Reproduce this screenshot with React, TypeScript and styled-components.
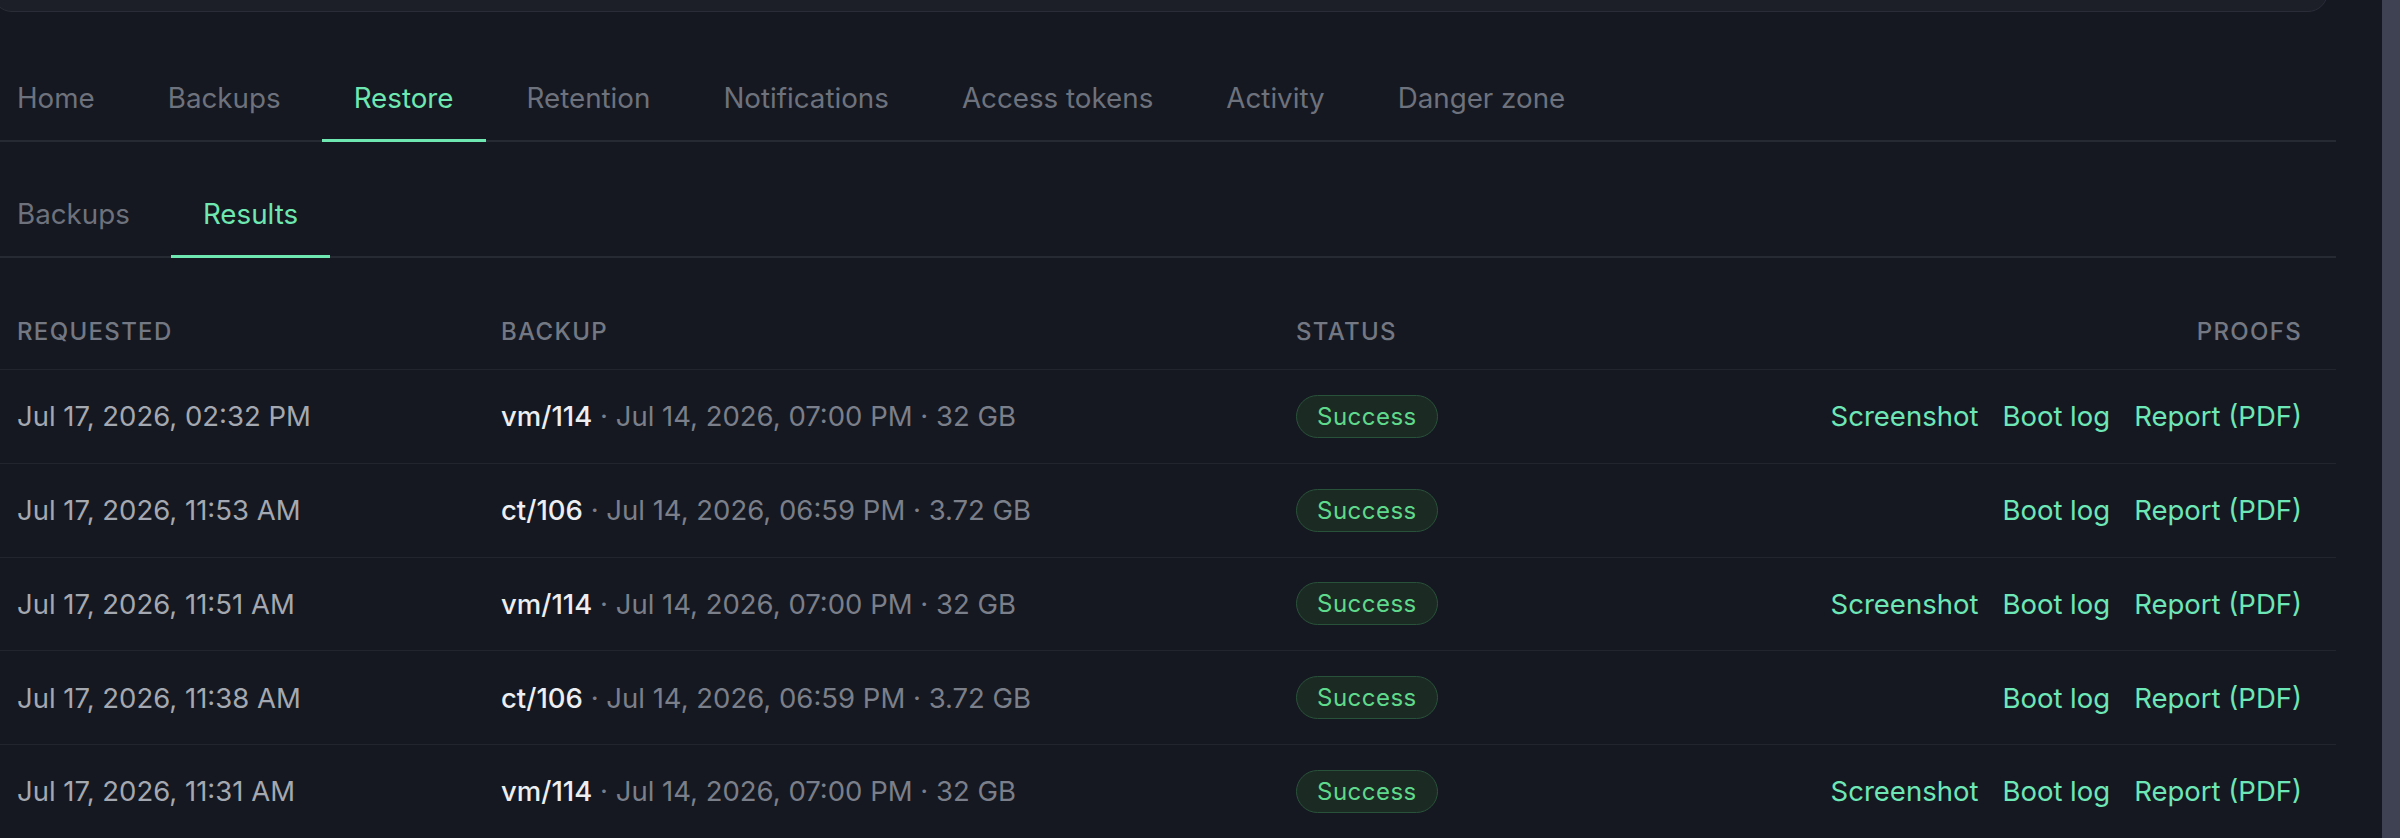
import React from 'react';
import styled, { createGlobalStyle } from 'styled-components';

const GlobalStyle = createGlobalStyle`
  html, body {
    margin: 0;
    padding: 0;
    background: #151821;
    overflow: hidden;
  }
  body {
    font-family: Inter, 'Noto Sans', sans-serif;
    -webkit-font-smoothing: antialiased;
  }
`;

type Row = {
  requested: string;
  id: string;
  meta: string;
  screenshot: boolean;
};

const rows: Row[] = [
  { requested: 'Jul 17, 2026, 02:32 PM', id: 'vm/114', meta: 'Jul 14, 2026, 07:00 PM · 32 GB', screenshot: true },
  { requested: 'Jul 17, 2026, 11:53 AM', id: 'ct/106', meta: 'Jul 14, 2026, 06:59 PM · 3.72 GB', screenshot: false },
  { requested: 'Jul 17, 2026, 11:51 AM', id: 'vm/114', meta: 'Jul 14, 2026, 07:00 PM · 32 GB', screenshot: true },
  { requested: 'Jul 17, 2026, 11:38 AM', id: 'ct/106', meta: 'Jul 14, 2026, 06:59 PM · 3.72 GB', screenshot: false },
  { requested: 'Jul 17, 2026, 11:31 AM', id: 'vm/114', meta: 'Jul 14, 2026, 07:00 PM · 32 GB', screenshot: true },
];

const mainTabs = ['Home', 'Backups', 'Restore', 'Retention', 'Notifications', 'Access tokens', 'Activity', 'Danger zone'];
const subTabs = ['Backups', 'Results'];

const App: React.FC = () => {
  return (
    <>
      <GlobalStyle />
      <Screen>
        <Main>
          <Content>
            <SummaryCard />
            <TabList $top={66}>
              {mainTabs.map((t) => (
                <Tab key={t} $active={t === 'Restore'}>
                  {t}
                </Tab>
              ))}
            </TabList>
            <TabList $top={52}>
              {subTabs.map((t) => (
                <Tab key={t} $active={t === 'Results'}>
                  {t}
                </Tab>
              ))}
            </TabList>
            <Table>
              <HeadRow>
                <HeadCell>Requested</HeadCell>
                <HeadCell>Backup</HeadCell>
                <HeadCell>Status</HeadCell>
                <HeadCell $right>Proofs</HeadCell>
              </HeadRow>
              {rows.map((r, i) => (
                <BodyRow key={i}>
                  <Cell>{r.requested}</Cell>
                  <Cell>
                    <BackupId>{r.id}</BackupId>
                    <BackupMeta> · {r.meta}</BackupMeta>
                  </Cell>
                  <Cell>
                    <Badge>Success</Badge>
                  </Cell>
                  <Cell $right>
                    <Links>
                      {r.screenshot && <ProofLink href="#">Screenshot</ProofLink>}
                      <ProofLink href="#">Boot log</ProofLink>
                      <ProofLink href="#">Report (PDF)</ProofLink>
                    </Links>
                  </Cell>
                </BodyRow>
              ))}
            </Table>
          </Content>
        </Main>
        <ScrollRail />
      </Screen>
    </>
  );
};

export default App;

const Screen = styled.div`
  display: flex;
  width: 2400px;
  height: 838px;
  overflow: hidden;
`;

const Main = styled.div`
  flex: 1;
  min-width: 0;
  overflow: hidden;
`;

const Content = styled.div`
  width: 2351px;
  margin-left: -15px;
`;

const SummaryCard = styled.div`
  height: 80px;
  margin: -70px 8px 0 7px;
  background: #1c1f28;
  border: 1.5px solid #2a2d37;
  border-radius: 20px;
`;

const TabList = styled.div<{ $top: number }>`
  display: flex;
  gap: 9px;
  margin-top: ${(p) => p.$top}px;
  border-bottom: 2px solid #262a33;
`;

const Tab = styled.div<{ $active?: boolean }>`
  padding: 0 32px 21px;
  margin-bottom: -2px;
  font-size: 27.75px;
  line-height: 40px;
  font-weight: 400;
  color: ${(p) => (p.$active ? '#6ee7b0' : '#6e727c')};
  border-bottom: 3px solid ${(p) => (p.$active ? '#6ee7b0' : 'transparent')};
  white-space: nowrap;
`;

const Table = styled.div`
  margin-top: 35px;
`;

const grid = `
  display: grid;
  grid-template-columns: 484px 795px 1fr 1fr;
  align-items: center;
`;

const HeadRow = styled.div`
  ${grid};
  height: 77px;
  border-bottom: 1.5px solid #22252e;
  box-sizing: border-box;
`;

const HeadCell = styled.div<{ $right?: boolean }>`
  padding: 0 32px;
  padding-right: ${(p) => (p.$right ? '34px' : '32px')};
  text-align: ${(p) => (p.$right ? 'right' : 'left')};
  font-size: 24px;
  font-weight: 500;
  letter-spacing: 0.055em;
  text-transform: uppercase;
  color: #747883;
`;

const BodyRow = styled.div`
  ${grid};
  height: 93.75px;
  border-bottom: 1.5px solid #22252e;
  box-sizing: border-box;
`;

const Cell = styled.div<{ $right?: boolean }>`
  padding: 0 32px;
  padding-right: ${(p) => (p.$right ? '34px' : '32px')};
  display: flex;
  justify-content: ${(p) => (p.$right ? 'flex-end' : 'flex-start')};
  align-items: center;
  font-size: 27.5px;
  color: #a4a8b0;
  white-space: nowrap;
`;

const BackupId = styled.span`
  color: #eceef2;
  font-weight: 500;
`;

const BackupMeta = styled.span`
  color: #7b7f89;
  white-space: pre;
`;

const Badge = styled.span`
  display: inline-flex;
  align-items: center;
  height: 43px;
  padding: 0 20px;
  box-sizing: border-box;
  border-radius: 999px;
  background: #1b2a23;
  border: 1.5px solid #29523a;
  color: #5fd98b;
  font-size: 24px;
  font-weight: 400;
  letter-spacing: 0.02em;
`;

const Links = styled.div`
  display: flex;
  gap: 24px;
`;

const ProofLink = styled.a`
  color: #6ee7b7;
  text-decoration: none;
  font-size: 27.5px;
`;

const ScrollRail = styled.div`
  width: 18px;
  flex-shrink: 0;
  background: #3f4252;
`;
